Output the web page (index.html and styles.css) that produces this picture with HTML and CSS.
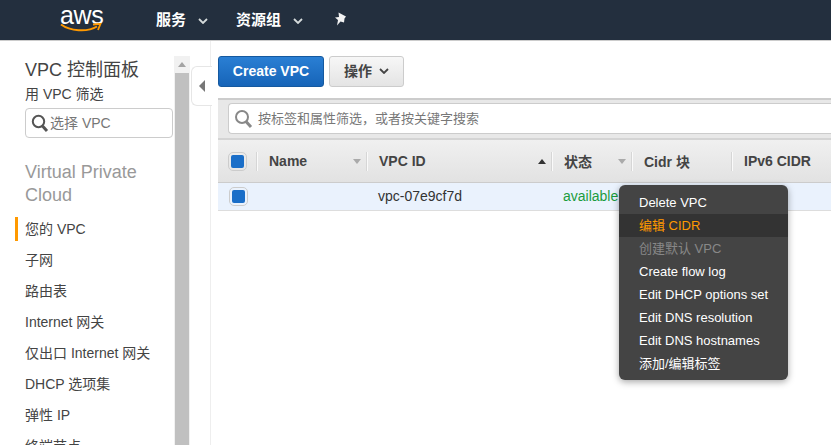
FILE: index.html
```html
<!DOCTYPE html>
<html lang="zh">
<head>
<meta charset="utf-8">
<title>VPC</title>
<link rel="stylesheet" href="styles.css">
</head>
<body>
<header class="topbar">
  <div class="logo">
    <span class="logo-text">aws</span>
    <svg class="smile" width="42" height="10" viewBox="0 0 42 10"><path d="M1 1.500C10 8 27 9.500 37 3.500" fill="none" stroke="#f90" stroke-width="2"/><path d="M33 1.500L40.500 .8L38 7" fill="none" stroke="#f90" stroke-width="1.800"/></svg>
  </div>
  <nav class="topnav">
    <span class="topnav-item services"><span class="nav-label">服务</span><svg class="chev" width="10" height="6" viewBox="0 0 10 6"><path d="M1 1l4 4 4-4" fill="none" stroke="#d5dbdb" stroke-width="1.800"/></svg></span>
    <span class="topnav-item groups"><span class="nav-label">资源组</span><svg class="chev" width="10" height="6" viewBox="0 0 10 6"><path d="M1 1l4 4 4-4" fill="none" stroke="#d5dbdb" stroke-width="1.800"/></svg></span>
    <svg class="pin" width="13" height="14" viewBox="0 0 13 14"><path d="M4.500 .5L12 4.500L10.500 6.500L10 10.500L6.500 9.500L3 13.500L4 8L1 5.500L5 5Z" fill="#f2f3f3"/></svg>
  </nav>
</header>
<div class="shell">
  <aside class="sidebar">
    <div class="side-inner">
      <div class="side-title">VPC 控制面板</div>
      <div class="side-sub">用 VPC 筛选</div>
      <div class="side-search">
        <svg width="18" height="19" viewBox="0 0 18 19"><circle cx="7.500" cy="7.500" r="5.700" fill="none" stroke="#555" stroke-width="2"/><path d="M11.500 12l4.500 5" stroke="#555" stroke-width="3"/></svg>
        <span>选择 VPC</span>
      </div>
      <div class="side-group">Virtual Private Cloud</div>
      <ul class="side-list">
        <li class="active">您的 VPC</li>
        <li>子网</li>
        <li>路由表</li>
        <li>Internet 网关</li>
        <li>仅出口 Internet 网关</li>
        <li>DHCP 选项集</li>
        <li>弹性 IP</li>
        <li>终端节点</li>
      </ul>
    </div>
    <div class="scrollbar">
      <div class="scroll-btn"><i></i></div>
      <div class="scroll-thumb"></div>
    </div>
  </aside>
  <div class="divider">
    <div class="collapse"><i></i></div>
  </div>
  <main class="main">
    <div class="toolbar">
      <button class="btn-primary">Create VPC</button>
      <button class="btn-default"><span class="btn-label">操作</span><svg width="10" height="6" viewBox="0 0 10 6"><path d="M1 1l4 4 4-4" fill="none" stroke="#444" stroke-width="1.800"/></svg></button>
    </div>
    <div class="filter">
      <div class="filter-input">
        <svg width="19" height="20" viewBox="0 0 19 20"><circle cx="8" cy="8" r="6" fill="none" stroke="#888" stroke-width="2"/><path d="M12 12.500l5 5.500" stroke="#888" stroke-width="3"/></svg>
        <span>按标签和属性筛选，或者按关键字搜索</span>
      </div>
    </div>
    <div class="thead">
      <div class="cell c-check"><span class="check"></span></div>
      <div class="cell c-name"><span>Name</span><i class="sort down"></i></div>
      <div class="cell c-id"><span>VPC ID</span><i class="sort up"></i></div>
      <div class="cell c-state"><span>状态</span><i class="sort down"></i></div>
      <div class="cell c-cidr"><span>Cidr 块</span></div>
      <div class="cell c-ipv6"><span>IPv6 CIDR</span></div>
    </div>
    <div class="trow">
      <div class="cell c-check"><span class="check"></span></div>
      <div class="cell c-name"></div>
      <div class="cell c-id"><span>vpc-07e9cf7d</span></div>
      <div class="cell c-state status"><span>available</span></div>
    </div>
  </main>
</div>
<ul class="menu">
  <li>Delete VPC</li>
  <li class="hover">编辑 CIDR</li>
  <li class="disabled">创建默认 VPC</li>
  <li>Create flow log</li>
  <li>Edit DHCP options set</li>
  <li>Edit DNS resolution</li>
  <li>Edit DNS hostnames</li>
  <li>添加/编辑标签</li>
</ul>
</body>
</html>
```
FILE: styles.css
```css
* { box-sizing: border-box; }
html, body { margin: 0; height: 100%; overflow: hidden; background: #fff; }
body { font-family: "Liberation Sans", "Noto Sans CJK SC", sans-serif; font-size: 14px; color: #444; display: flex; flex-direction: column; }

.topbar { height: 41px; flex: none; background: #232f3e; border-bottom: 1px solid #ccc; display: flex; align-items: center; }
.logo { width: 156px; height: 40px; padding-left: 60px; position: relative; }
.logo-text { display: block; color: #fff; font-size: 25px; line-height: 26px; padding-top: 2px; letter-spacing: -.4px; }
.smile { position: absolute; left: 60px; top: 23px; }
.topnav { display: flex; align-items: center; color: #fff; font-weight: 700; font-size: 15px; }
.topnav-item { display: flex; align-items: center; }
.nav-label { padding-bottom: 3px; }
.chev { margin-left: 12px; margin-top: 2px; }
.services { width: 80px; }
.groups { width: 98px; }
.pin { margin-top: -2px; }

.shell { flex: 1; display: flex; min-height: 0; }
.sidebar { width: 190px; flex: none; display: flex; }
.side-inner { width: 174px; padding: 16px 0 0 25px; overflow: hidden; }
.side-title { font-size: 18px; line-height: 26px; color: #444; }
.side-sub { font-size: 14px; line-height: 20px; margin-top: 1px; }
.side-search { width: 148px; height: 30px; border: 1px solid #ccc; border-radius: 4px; margin-top: 4px; display: flex; align-items: center; padding-left: 5px; gap: 1px; color: #777; font-size: 14px; }
.side-search span { padding-bottom: 2px; }
.side-group { font-size: 18px; line-height: 23px; color: #999; width: 130px; margin-top: 23px; }
.side-list { list-style: none; margin: 10px 0 0; padding: 0; }
.side-list li { height: 31px; line-height: 24px; white-space: nowrap; position: relative; }
.side-list li.active::before { content: ""; position: absolute; left: -10px; top: 0; width: 3px; height: 24px; background: #f90; }

.scrollbar { width: 16px; margin-top: 15px; background: #f1f1f1; padding: 0 1px; }
.scroll-btn { height: 17px; display: flex; align-items: center; justify-content: center; }
.scroll-btn i { border: 4px solid transparent; border-top: 0; border-bottom: 5px solid #a3a3a3; }
.scroll-thumb { height: 100%; background: #c0c0c0; }

.divider { width: 21px; flex: none; border-right: 1px solid #eee; position: relative; }
.collapse { position: absolute; left: 1px; top: 25px; width: 21px; height: 40px; background: #fff; border: 1px solid #e6e6e6; border-right: 0; border-radius: 6px 0 0 6px; display: flex; align-items: center; padding-left: 7px; }
.collapse i { border: 5px solid transparent; border-left: 0; border-right: 6px solid #777; border-top-width: 6px; border-bottom-width: 6px; }

.main { flex: 1; min-width: 0; padding: 15px 0 0 7px; overflow: hidden; }
.toolbar { display: flex; gap: 5px; height: 42px; align-items: flex-start; }
.btn-primary { width: 106px; height: 31px; border: 1px solid #15599f; border-radius: 3px; background: linear-gradient(#2a7fd4, #1664b8); color: #fff; font: 700 14px "Liberation Sans", "Noto Sans CJK SC", sans-serif; padding: 0 0 2px; }
.btn-default { width: 75px; height: 31px; border: 1px solid #ccc; border-radius: 3px; background: linear-gradient(#f7f7f7, #e4e4e4); color: #444; font: 700 14px "Liberation Sans", "Noto Sans CJK SC", sans-serif; padding: 0 0 2px; display: flex; align-items: center; justify-content: center; gap: 7px; }
.btn-label { padding-bottom: 2px; }
.filter { height: 42px; background: #e8e8e8; border-top: 2px solid #ccc; border-bottom: 2px solid #d4d4d4; padding: 3px 0 0 10px; width: 700px; }
.filter-input { height: 31px; background: #fff; border: 1px solid #ccc; border-right: 0; border-radius: 4px 0 0 4px; display: flex; align-items: center; padding-left: 5px; gap: 5px; color: #777; font-size: 13px; white-space: nowrap; }
.filter-input span { padding-bottom: 2px; }
.thead { height: 43px; width: 700px; background: linear-gradient(#f0f0f0, #e2e2e2); border-bottom: 1px solid #ccc; display: flex; align-items: center; font-weight: 700; white-space: nowrap; }
.thead .cell span:not(.check) { padding-bottom: 1px; }
.thead .c-state span, .thead .c-cidr span { padding-bottom: 3px; }
.trow { height: 28px; width: 700px; background: #eaf2fd; border-bottom: 1px solid #ddd; display: flex; align-items: center; color: #333; }
.trow .cell span:not(.check) { padding-bottom: 2px; }
.cell { height: 100%; display: flex; align-items: center; position: relative; flex: none; }
.thead .cell::after { content: ""; position: absolute; right: 0; top: 12px; height: 19px; width: 1px; background: #fafafa; box-shadow: -1px 0 0 #d6d6d6; }
.thead .c-ipv6::after { display: none; }
.c-check { width: 40px; padding-left: 10px; }
.c-name { width: 110px; padding-left: 11px; }
.c-id { width: 185px; padding-left: 11px; }
.c-state { width: 80px; padding-left: 11px; }
.c-cidr { width: 100px; padding-left: 11px; }
.c-ipv6 { width: 120px; padding-left: 11px; }
.trow .c-check { padding-left: 11px; }
.trow .c-id { padding-left: 10px; }
.trow .c-state { padding-left: 10px; }
.status { color: #1a9c3e; }
.check { width: 19px; height: 19px; display: block; border-radius: 5px; border: 1px solid #ccc; padding: 2px; background: #1a6ec8 content-box; }
.sort { position: absolute; right: 7px; top: 19px; border: 4px solid transparent; border-bottom: 0; border-top: 5px solid #aaa; }
.sort.up { border-top: 0; border-bottom: 5px solid #333; }

.menu { position: absolute; left: 619px; top: 185px; width: 169px; height: 195px; margin: 0; padding: 6px 0; list-style: none; background: #444; border-radius: 6px; box-shadow: 0 2px 7px rgba(0,0,0,.35); color: #fff; font-size: 13px; }
.menu li { height: 23px; line-height: 23px; padding-left: 20px; white-space: nowrap; }
.menu .hover { background: #333; color: #f90; }
.menu .disabled { color: #888; }
```
